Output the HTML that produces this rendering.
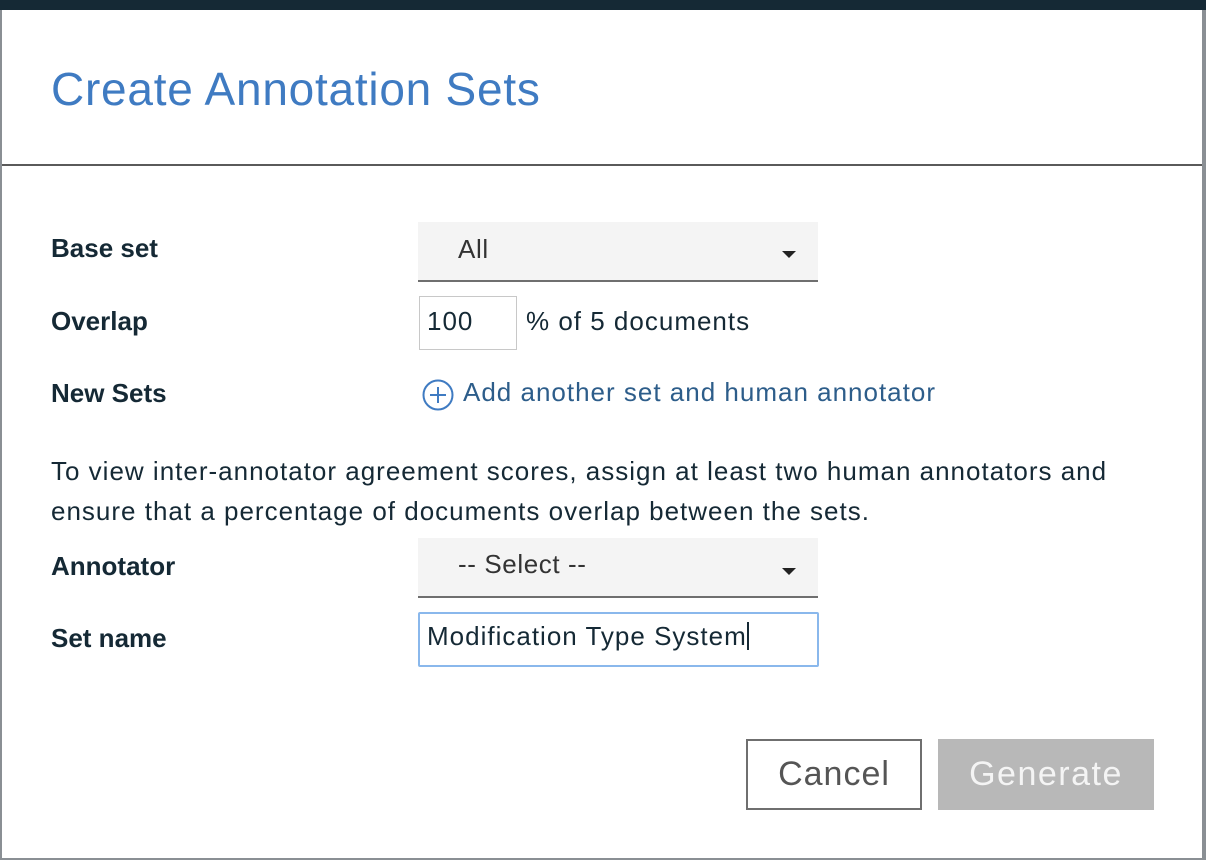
<!DOCTYPE html>
<html><head><meta charset="utf-8"><style>
*{margin:0;padding:0;box-sizing:border-box}
body{width:1206px;height:860px;background:#8a8f94;position:relative;overflow:hidden;font-family:"Liberation Sans",sans-serif;color:#152935}
.top{position:absolute;left:0;top:0;width:1206px;height:10px;background:#152935}
.modal{position:absolute;left:2px;top:10px;width:1200px;height:848px;background:#fff}
.a{position:absolute;white-space:nowrap}
.lbl{font-size:26px;font-weight:bold;color:#152935}
.t{font-size:26px;letter-spacing:1px}
.sel{position:absolute;left:416px;width:400px;background:#f4f4f4;border-bottom:2px solid #6f6f6f}
.sel span{position:absolute;left:40px;font-size:26px;color:#333;letter-spacing:0.6px}
.car{position:absolute;left:364px;width:0;height:0;border-left:7px solid transparent;border-right:7px solid transparent;border-top:7px solid #222}
</style></head><body>
<div class="top"></div>
<div class="modal">
<div class="a" style="left:49px;top:52px;font-size:46px;color:#3f7bc2;letter-spacing:0.75px">Create Annotation Sets</div>
<div style="position:absolute;left:0;top:154px;width:1200px;height:2px;background:#5a5a5a"></div>
<div class="a lbl" style="left:49px;top:223px">Base set</div>
<div class="sel" style="top:212px;height:60px"><span style="top:12px">All</span><div class="car" style="top:29px"></div></div>
<div class="a lbl" style="left:49px;top:296px">Overlap</div>
<div style="position:absolute;left:417px;top:286px;width:98px;height:54px;border:1px solid #c8c8c8"></div>
<div class="a t" style="left:425px;top:296px">100</div>
<div class="a t" style="left:524px;top:296px">% of 5 documents</div>
<div class="a lbl" style="left:49px;top:368px">New Sets</div>
<svg style="position:absolute;left:420px;top:369px" width="32" height="32" viewBox="0 0 32 32"><circle cx="16" cy="16" r="14.5" fill="none" stroke="#3f7bc2" stroke-width="2"/><path d="M16 8v16M8 16h16" stroke="#3f7bc2" stroke-width="2"/></svg>
<div class="a t" style="left:461px;top:367px;color:#2d5d8a">Add another set and human annotator</div>
<div class="a t" style="left:49px;top:441px;line-height:40px;color:#152935">To view inter-annotator agreement scores, assign at least two human annotators and<br>ensure that a percentage of documents overlap between the sets.</div>
<div class="a lbl" style="left:49px;top:541px">Annotator</div>
<div class="sel" style="top:528px;height:60px"><span style="top:11px">-- Select --</span><div class="car" style="top:30px"></div></div>
<div class="a lbl" style="left:49px;top:613px">Set name</div>
<div style="position:absolute;left:416px;top:602px;width:401px;height:55px;border:2px solid #8ab8ec;border-radius:2px"></div>
<div class="a t" style="left:425px;top:611px;letter-spacing:1px">Modification Type System<span style="display:inline-block;width:2px;height:28px;background:#152935;vertical-align:-5px"></span></div>
<div style="position:absolute;left:744px;top:729px;width:176px;height:71px;border:2px solid #6f6f6f;font-size:34px;letter-spacing:1px;color:#555;text-align:center;line-height:67px">Cancel</div>
<div style="position:absolute;left:936px;top:729px;width:216px;height:71px;background:#b8b8b8;font-size:34px;letter-spacing:1.5px;color:#f4f4f4;text-align:center;line-height:71px">Generate</div>
</div>
</body></html>
